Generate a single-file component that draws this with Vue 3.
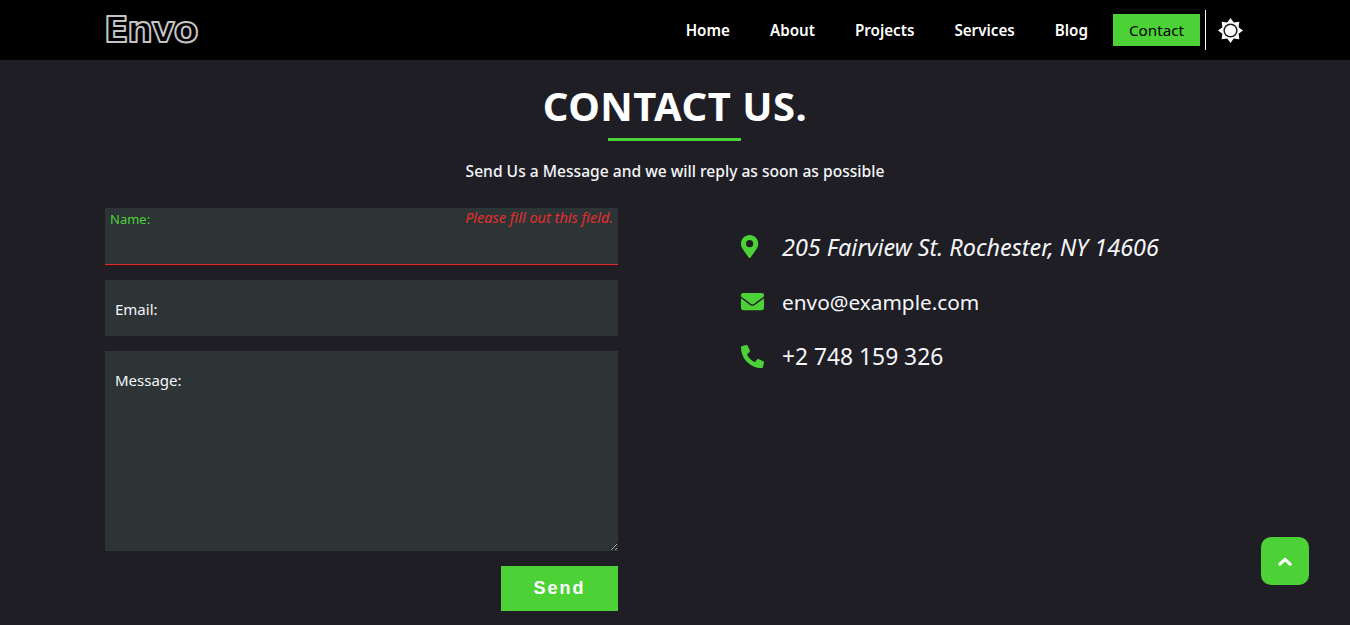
<template>
  <div class="page">
    <header class="navbar">
      <div class="navInner">
        <svg class="logo" width="104" height="44" viewBox="0 0 104 44">
          <text x="1" y="34" font-family="DejaVu Sans" font-weight="700" font-size="36" letter-spacing="-1.300" fill="#000" stroke="#c4c4c4" stroke-width="2" stroke-linejoin="round">Envo</text>
        </svg>
        <nav class="links">
          <a class="link" v-for="item in links" :key="item" :class="{ active: item === 'Contact' }">{{ item }}</a>
          <span class="divider"></span>
          <svg class="sun" viewBox="0 0 26 26" width="25" height="25">
            <polygon fill="#fff" points="13,0 16.4,4.6 22.2,3.800 21.4,9.6 26,13 21.4,16.4 22.2,22.2 16.4,21.4 13,26 9.6,21.4 3.800,22.2 4.6,16.4 0,13 4.6,9.6 3.800,3.800 9.6,4.6" />
            <circle cx="13" cy="13" r="7.400" fill="#1a1a1a" />
            <circle cx="13" cy="13" r="5.800" fill="#fff" />
          </svg>
        </nav>
      </div>
    </header>

    <main class="contact">
      <h1 class="title">CONTACT US.</h1>
      <div class="underline"></div>
      <p class="subtitle">Send Us a Message and we will reply as soon as possible</p>

      <div class="columns">
        <form class="form" @submit.prevent>
          <div class="field invalid">
            <label class="label">Name:</label>
            <span class="error">Please fill out this field.</span>
            <input type="text" />
          </div>
          <div class="field">
            <label class="label">Email:</label>
            <input type="email" />
          </div>
          <div class="field">
            <label class="label">Message:</label>
            <textarea></textarea>
          </div>
          <button class="send" type="submit">Send</button>
        </form>

        <ul class="info">
          <li class="infoItem address">
            <svg class="infoIcon" viewBox="0 0 384 512" preserveAspectRatio="xMinYMid meet"><path fill="#4cd137" d="M172.3 501.7C27 291 0 269.4 0 192 0 86 86 0 192 0s192 86 192 192c0 77.4-27 99-172.3 309.7a24 24 0 0 1-39.4 0zM192 272a80 80 0 1 0 0-160 80 80 0 0 0 0 160z" /></svg>
            <span>205 Fairview St. Rochester, NY 14606</span>
          </li>
          <li class="infoItem email">
            <svg class="infoIcon" viewBox="0 0 512 512"><path fill="#4cd137" d="M502.3 190.8a6 6 0 0 1 9.700 4.700V400a48 48 0 0 1-48 48H48a48 48 0 0 1-48-48V195.600a6 6 0 0 1 9.700-4.700c22.400 17.400 52.100 39.500 154.100 113.600 21.100 15.400 56.700 47.800 92.200 47.600 35.700.3 72-32.800 92.300-47.600 102-74.100 131.600-96.300 154-113.700zM256 320c23.200.4 56.600-29.200 73.400-41.400 132.700-96.300 142.800-104.700 173.400-128.700A24 24 0 0 0 512 131v-19a48 48 0 0 0-48-48H48a48 48 0 0 0-48 48v19a24 24 0 0 0 9.200 18.900c30.600 23.900 40.700 32.400 173.400 128.700 16.800 12.200 50.200 41.800 73.400 41.400z" /></svg>
            <span>envo@example.com</span>
          </li>
          <li class="infoItem phone">
            <svg class="infoIcon" viewBox="0 0 512 512"><path fill="#4cd137" d="M18.900 24.600 122.900.6c11.300-2.600 22.900 3.300 27.500 13.900l48 112c4.200 9.800 1.400 21.300-6.900 28l-60.600 49.600c36 76.700 98.900 140.500 177.200 177.200l49.600-60.600c6.800-8.300 18.200-11.100 28-6.900l112 48c10.700 4.700 16.600 16.300 14 27.600l-24 104C484.700 504.200 474.900 512 464 512 207.800 512 0 304.600 0 48c0-11.200 7.700-20.900 18.900-23.400z" /></svg>
            <span>+2 748 159 326</span>
          </li>
        </ul>
      </div>
    </main>

    <button class="toTop" type="button">
      <svg viewBox="0 0 16 10" width="14" height="9"><path d="M2.200 8L8 2.500 13.800 8" fill="none" stroke="#fff" stroke-width="3.600" stroke-linecap="round" stroke-linejoin="round" /></svg>
    </button>
  </div>
</template>

<script setup>
const links = ['Home', 'About', 'Projects', 'Services', 'Blog', 'Contact']
</script>

<style>
html, body {
  margin: 0;
  background: #1e1e24;
}
</style>

<style scoped>
.page {
  height: 625px;
  overflow: hidden;
  background: #1e1e24;
  font-family: "Noto Sans", "Open Sans", sans-serif;
  color: #f5f6fa;
}

.navbar {
  height: 60px;
  background: #000;
}

.navInner {
  width: 1140px;
  height: 100%;
  margin: 0 auto;
  display: flex;
  align-items: center;
  justify-content: space-between;
}

.logo {
  display: block;
  margin-left: -2px;
}

.links {
  display: flex;
  align-items: center;
  padding-right: 2px;
}

.link {
  padding: 0 20px;
  font-size: 15.200px;
  font-weight: 600;
  color: #fff;
}

.link.active {
  display: flex;
  align-items: center;
  justify-content: center;
  box-sizing: border-box;
  width: 87px;
  height: 32px;
  margin-left: 5px;
  padding: 0;
  background: #4cd137;
  color: #000;
  font-weight: 400;
}

.divider {
  width: 1px;
  height: 40px;
  margin: 0 12px 0 5px;
  background: #fff;
}

.sun {
  display: block;
}

.contact {
  width: 1140px;
  margin: 0 auto;
}

.title {
  margin: 0;
  padding-top: 21px;
  font-size: 40px;
  line-height: 50px;
  letter-spacing: 0.5px;
  font-weight: 700;
  color: #fff;
  text-align: center;
}

.underline {
  width: 133px;
  height: 3px;
  margin: 7px 0 0 503px;
  background: #4cd137;
}

.subtitle {
  margin: 19px 0 0;
  font-size: 15.600px;
  line-height: 22px;
  font-weight: 500;
  text-align: center;
}

.columns {
  display: flex;
  margin-top: 26px;
}

.form {
  width: 513px;
  display: flex;
  flex-direction: column;
  gap: 15px;
}

.field {
  position: relative;
}

.field input,
.field textarea {
  display: block;
  width: 100%;
  box-sizing: border-box;
  margin: 0;
  padding: 10px;
  border: none;
  border-radius: 0;
  outline: none;
  background: #2d3436;
  color: #f5f6fa;
}

.field input {
  height: 56px;
}

.field textarea {
  height: 200px;
}

.field.invalid input {
  height: 57px;
  box-shadow: inset 0 -1px 0 #d03030, 0 1px 0 #4d0a0a;
}

.label {
  position: absolute;
  top: 19px;
  left: 10px;
  font-size: 15px;
  line-height: 20px;
}

.field.invalid .label {
  top: 2px;
  left: 5px;
  font-size: 13px;
  line-height: 18px;
  color: #4cd137;
}

.error {
  position: absolute;
  top: 0;
  right: 5px;
  font-size: 14.500px;
  line-height: 18px;
  font-style: italic;
  color: #e52e2e;
}

.send {
  align-self: flex-end;
  width: 117px;
  height: 45px;
  border: none;
  background: #4cd137;
  color: #fff;
  font-family: "Liberation Sans", sans-serif;
  font-size: 18px;
  font-weight: 700;
  letter-spacing: 2px;
}

.info {
  list-style: none;
  margin: 0 0 0 123px;
  padding: 22px 0 0;
  display: flex;
  flex-direction: column;
  gap: 22px;
}

.infoItem {
  display: flex;
  align-items: center;
  gap: 18px;
  height: 33px;
  color: #f5f6fa;
}

.address {
  font-size: 23.400px;
  font-style: italic;
}

.email {
  font-size: 20.800px;
}

.phone {
  font-size: 22.800px;
}

.infoIcon {
  flex-shrink: 0;
  width: 23px;
  height: 23px;
}

.toTop {
  position: fixed;
  right: 41px;
  bottom: 40px;
  width: 48px;
  height: 48px;
  padding: 0;
  display: flex;
  align-items: center;
  justify-content: center;
  border: none;
  border-radius: 10px;
  background: #4cd137;
}
</style>
